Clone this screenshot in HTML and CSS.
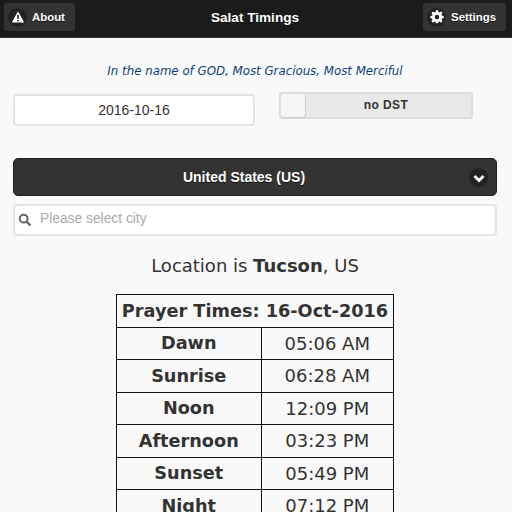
FILE: index.html
```html
<!DOCTYPE html>
<html lang="en">
<head>
<meta charset="utf-8">
<title>Salat Timings</title>
<link rel="stylesheet" href="styles.css">
</head>
<body>
<header class="topbar">
  <div class="topbtn">
    <span class="ico"><svg viewBox="0 0 14 14" width="14" height="14"><path fill="#fff" fill-rule="evenodd" d="M7 1.2 13.2 12.6H.8ZM6.1 5 6.3 9.1H7.7L7.9 5ZM6.2 9.9V11.3H7.8V9.9Z"/></svg></span>
    <span>About</span>
  </div>
  <h1 class="title">Salat Timings</h1>
  <div class="topbtn right">
    <span class="ico"><svg viewBox="0 0 14 14" width="14" height="14"><path fill="#fff" fill-rule="evenodd" d="M5.9 1H8.1L8.4 2.8 9.5 3.3 11 2.2 12.6 3.8 11.5 5.3 12 6.4 13.7 6.7V8.9L12 9.2 11.5 10.3 12.6 11.8 11 13.4 9.5 12.3 8.4 12.8 8.1 14H5.9L5.6 12.8 4.5 12.3 3 13.4 1.4 11.8 2.5 10.3 2 9.2.3 8.9V6.7L2 6.4 2.5 5.3 1.4 3.8 3 2.2 4.5 3.3 5.6 2.8ZM7 5.5A2.3 2.3 0 1 0 7 10.1 2.3 2.3 0 1 0 7 5.5Z" transform="translate(0 -.7)"/></svg></span>
    <span>Settings</span>
  </div>
</header>
<main class="content">
  <p class="tagline">In the name of GOD, Most Gracious, Most Merciful</p>
  <div class="controls">
    <div class="field date">2016-10-16</div>
    <div class="flip"><span class="handle"></span><span class="fliplabel">no DST</span></div>
  </div>
  <div class="select">United States (US)<span class="chev"><svg viewBox="0 0 14 14" width="14" height="14"><path fill="none" stroke="#fff" stroke-width="3" d="M2.5 5 7 9.5 11.5 5"/></svg></span></div>
  <div class="field search">
    <svg viewBox="0 0 14 14" width="14" height="14"><circle cx="5.7" cy="5.7" r="3.9" fill="none" stroke="#666" stroke-width="2"/><path stroke="#666" stroke-width="2.4" d="M8.6 8.6 12.5 12.5"/></svg>
    <span>Please select city</span>
  </div>
  <p class="location">Location is <b>Tucson</b>, US</p>
  <table class="times">
    <colgroup><col class="c1"><col class="c2"></colgroup>
    <tr><th colspan="2" class="head">Prayer Times: 16-Oct-2016</th></tr>
    <tr><th>Dawn</th><td>05:06 AM</td></tr>
    <tr><th>Sunrise</th><td>06:28 AM</td></tr>
    <tr><th>Noon</th><td>12:09 PM</td></tr>
    <tr><th>Afternoon</th><td>03:23 PM</td></tr>
    <tr><th>Sunset</th><td>05:49 PM</td></tr>
    <tr><th>Night</th><td>07:12 PM</td></tr>
  </table>
</main>
</body>
</html>
```
FILE: styles.css
```css
html, body { margin: 0; height: 512px; overflow: hidden; }
body { background: #f9f9f9; color: #333; font-family: "DejaVu Sans", sans-serif; }
.topbar {
  height: 37px; background: #1b1b1b; border-bottom: 1px solid #333;
  display: grid; grid-template-columns: 1fr auto 1fr; align-items: start;
  padding: 0 6px 0 4px;
  font-family: "Liberation Sans", sans-serif; color: #fff;
}
.title { margin: 10px 0 0; font-size: 13.6px; line-height: 16px; font-weight: bold; text-shadow: 0 1px 0 #111; }
.topbtn {
  height: 28px; margin-top: 3px; background: #333; border-radius: 3px; display: flex; align-items: center; gap: 5px;
  padding: 0 10px 0 4px; font-size: 11.4px; font-weight: bold; text-shadow: 0 1px 0 #111; box-sizing: border-box;
  justify-self: start;
}
.topbtn.right { justify-self: end; }
.ico { width: 19px; height: 19px; border-radius: 50%; background: #222; display: flex; align-items: center; justify-content: center; }
.content { padding: 0 15px 0 13px; }
.tagline { margin: 26px 0 0; height: 14px; line-height: 14px; text-align: center; font-size: 11.8px; font-style: italic; color: #0f3f78; }
.controls { display: flex; gap: 24px; align-items: flex-start; margin-top: 14px; }
.field {
  background: #fff; border: 2px solid #e4e4e4; border-radius: 4px; box-sizing: border-box;
  font-family: "Liberation Sans", sans-serif;
}
.date { width: 242px; height: 32px; margin-top: 2px; line-height: 29px; text-align: center; font-size: 14px; }
.flip {
  width: 194px; height: 27px; background: #e9e9e9; border: 2px solid #ddd; border-radius: 3px; box-sizing: border-box;
  display: flex; align-items: center; font-family: "Liberation Sans", sans-serif; font-size: 12px; font-weight: bold; letter-spacing: .4px;
}
.handle { width: 24px; height: 23px; background: #f6f6f6; border-radius: 3px; box-shadow: 1px 1px 1px #ccc; }
.fliplabel { flex: 1; text-align: center; position: relative; left: -2px; top: -1px; }
.select {
  margin-top: 32px; height: 38px; box-sizing: border-box; background: #333; border: 1px solid #1f1f1f; border-radius: 5px;
  color: #fff; font-family: "Liberation Sans", sans-serif; font-size: 14px; font-weight: bold; text-shadow: 0 1px 0 #111;
  display: flex; align-items: center; justify-content: center; position: relative; padding-right: 22px;
}
.chev { position: absolute; right: 8px; top: 9px; width: 19px; height: 19px; border-radius: 50%; background: #222; display: flex; align-items: center; justify-content: center; }
.search { margin-top: 8px; height: 32px; display: flex; align-items: center; gap: 8px; padding-left: 3px; font-size: 13.8px; color: #aaa; }
.search span { position: relative; top: -2px; }
.location { margin: 19px 0 0; height: 21px; line-height: 21px; text-align: center; font-size: 18px; }
.times { margin: 18px auto 0; border-collapse: collapse; width: 278px; font-size: 17.7px; table-layout: fixed; }
.c1 { width: 144.5px; }
.times th, .times td { border: 1px solid #111; height: 31.5px; padding: 0; text-align: center; }
.times th { font-weight: bold; }
.times td { font-weight: normal; font-size: 18px; }
```
